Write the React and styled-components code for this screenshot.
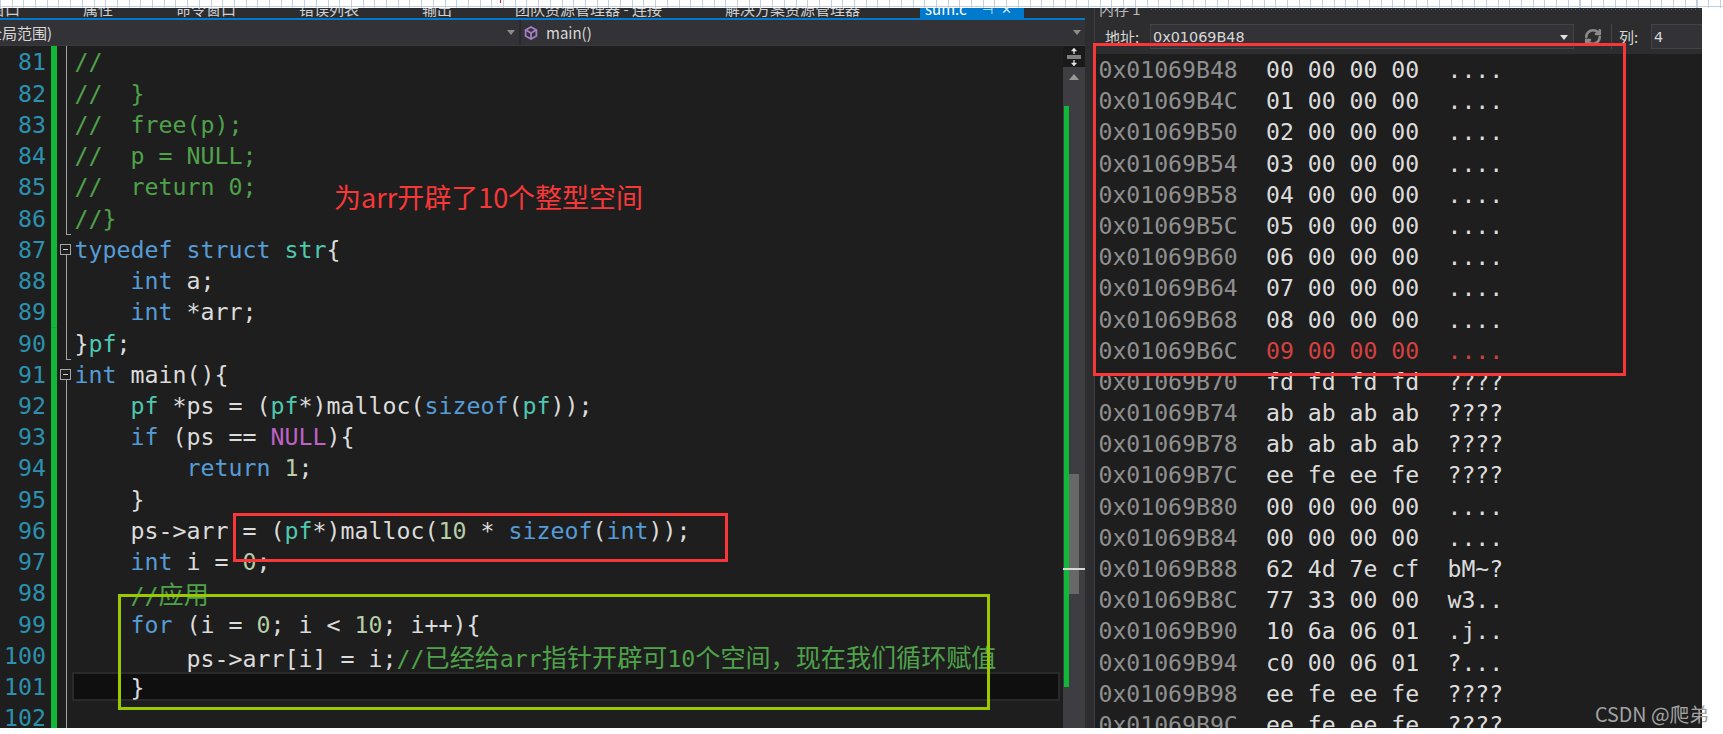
// App.jsx
import React from 'react';
import styled, { createGlobalStyle } from 'styled-components';
import { RefreshCw } from 'lucide-react';

const MONO = `"DejaVu Sans Mono", "Noto Sans CJK SC", monospace`;
const UI = `"Noto Sans CJK SC", "Noto Sans", sans-serif`;

const GlobalStyle = createGlobalStyle`
  html, body {
    margin: 0;
    padding: 0;
    background: #fff;
  }
`;

const Page = styled.div`
  position: relative;
  width: 1723px;
  height: 734px;
  overflow: hidden;
  background: #fff;
  font-family: ${UI};
`;

const RulerStrip = styled.div`
  height: 8px;
  background:
    linear-gradient(#e02020, #e02020) 500px 0 / 1px 3px no-repeat,
    linear-gradient(#c3cfe2, #c3cfe2) 0 6px / 100% 1px no-repeat,
    repeating-linear-gradient(90deg, #c3cfe2 0 1px, #fff 1px 11.7px);
`;

const Workspace = styled.div`
  display: flex;
  width: 1702px;
  height: 720px;
  background: #2d2d30;
`;

const EditorPane = styled.div`
  display: flex;
  flex-direction: column;
  width: 1085px;
  flex: none;
  margin-right: 9px;
`;

const TabBar = styled.div`
  display: flex;
  align-items: flex-end;
  gap: 63px;
  height: 10px;
  overflow: hidden;
  border-bottom: 2px solid #007acc;
  background: #2d2d30;
`;

const Tab = styled.div`
  flex: none;
  height: 18px;
  line-height: 18px;
  font-size: 15px;
  color: #d0d0d0;
  white-space: nowrap;
  &:first-child {
    margin-left: -10px;
  }
`;

const ActiveTab = styled(Tab)`
  display: flex;
  align-items: center;
  width: 104px;
  margin-left: -3px;
  padding-left: 5px;
  box-sizing: border-box;
  background: #007acc;
  color: #fff;
`;

const TabGlyph = styled.span`
  margin-left: ${p => p.$gap}px;
  font-size: 13px;
  color: #cfe6f6;
`;

const NavBar = styled.div`
  display: flex;
  height: 25px;
  border-bottom: 1px solid #3a3a3e;
  background: #333337;
  box-sizing: content-box;
`;

const NavCombo = styled.div`
  display: flex;
  align-items: center;
  flex: ${p => (p.$grow ? 1 : 'none')};
  width: ${p => (p.$grow ? 'auto' : '519px')};
  overflow: hidden;
  font-size: 15px;
  line-height: 25px;
  color: #d8d8d8;
  white-space: nowrap;
  & + & {
    border-left: 2px solid #2a2a2d;
  }
`;

const NavScope = styled.span`
  flex: 1;
  margin-left: -18px;
`;

const NavMember = styled.span`
  flex: 1;
  margin-left: 8px;
`;

const DropArrow = styled.span`
  flex: none;
  width: 0;
  height: 0;
  margin-right: ${p => p.$right}px;
  border-left: 4px solid transparent;
  border-right: 4px solid transparent;
  border-top: 5px solid ${p => p.$color || '#8c8c8c'};
`;

const MemberIcon = styled.svg`
  flex: none;
  width: 14px;
  height: 14px;
  margin-left: 3px;
`;

const EditorBody = styled.div`
  display: flex;
  flex: 1;
  min-height: 0;
  background: #1e1e1e;
`;

const CodeArea = styled.div`
  flex: 1;
  min-width: 0;
  padding-top: 0.4px;
  overflow: hidden;
`;

const CodeRow = styled.div`
  display: grid;
  grid-template-columns: 46px 5px 6px 15px 1fr;
  height: 31.24px;
  font-family: ${MONO};
  font-size: 23.25px;
  line-height: 32.2px;
`;

const LineNo = styled.div`
  grid-column: 1;
  text-align: right;
  color: #2b91af;
`;

const ChangeMark = styled.div`
  grid-column: 3;
  background: #10b837;
  border-bottom: 1px solid #12a536;
`;

const Outline = styled.div`
  grid-column: 4;
  position: relative;
  &::before {
    content: '';
    position: absolute;
    left: 9px;
    top: ${p => (p.$kind === 'open' ? '50%' : '0')};
    bottom: 0;
    width: 1px;
    background: #a5a5a5;
  }
  ${p => p.$kind === 'end' && `
    &::after {
      content: '';
      position: absolute;
      left: 9px;
      bottom: 0;
      width: 5px;
      height: 1px;
      background: #a5a5a5;
    }
  `}
`;

const FoldBox = styled.span`
  position: absolute;
  left: 3px;
  top: 10px;
  width: 11px;
  height: 11px;
  box-sizing: border-box;
  border: 1px solid #a5a5a5;
  background: #1e1e1e;
  &::after {
    content: '';
    position: absolute;
    left: 2px;
    right: 2px;
    top: 4px;
    height: 1px;
    background: #d0d0d0;
  }
`;

const CodeText = styled.div`
  grid-column: 5;
  padding-left: 2.6px;
  white-space: pre;
  color: #dcdcdc;
  ${p => p.$current && `
    height: 29px;
    margin: 1px 3px 0 0;
    box-sizing: border-box;
    border: 2px solid #2a2a2a;
    padding-left: 0.6px;
    line-height: 28px;
    background: #0f0f0f;
  `}
`;

const TOKEN_COLORS = {
  kw: '#569cd6',
  type: '#4ec9b0',
  num: '#b5cea8',
  macro: '#bd63c5',
  cm: '#4fa24a',
};

const Token = styled.span`
  color: ${p => TOKEN_COLORS[p.$t] || '#dcdcdc'};
`;

const Cjk = styled.span`
  font-family: ${UI};
  font-size: 25.1px;
`;

const ScrollBar = styled.div`
  display: flex;
  flex-direction: column;
  flex: none;
  width: 22px;
  background: #3e3e42;
`;

const SplitButton = styled.div`
  display: flex;
  align-items: center;
  justify-content: center;
  height: 21px;
  background: #1a1a1a;
`;

const ScrollUp = styled.div`
  height: 0;
  width: 0;
  margin: 7px 0 0 6px;
  border-left: 5.5px solid transparent;
  border-right: 5.5px solid transparent;
  border-bottom: 6px solid #999;
`;

const ScrollTrack = styled.div`
  position: relative;
  flex: 1;
`;

const ScrollThumb = styled.div`
  position: absolute;
  left: 6px;
  top: 394px;
  width: 10px;
  height: 120px;
  background: #686868;
`;

const CoverageBar = styled.div`
  position: absolute;
  left: 1px;
  top: 26px;
  width: 5px;
  height: 581px;
  background: #10b837;
`;

const CaretMark = styled.div`
  position: absolute;
  left: 0;
  right: 0;
  top: 488px;
  height: 2px;
  background: #d8d8d8;
`;

const MemoryPane = styled.div`
  display: flex;
  flex-direction: column;
  flex: 1;
  min-width: 0;
  overflow: hidden;
  border-left: 1px solid #3f3f46;
`;

const PaneTitle = styled.div`
  display: flex;
  align-items: flex-end;
  height: 10px;
  padding-left: 4px;
  overflow: hidden;
`;

const PaneTitleText = styled.div`
  flex: none;
  height: 18px;
  line-height: 18px;
  font-size: 15px;
  color: #b8b8b8;
  white-space: nowrap;
`;

const PaneGrip = styled.div`
  flex: 1;
  height: 1px;
  margin: 0 0 8px 10px;
  background: repeating-linear-gradient(90deg, #5a5a5e 0 1px, transparent 1px 4px);
`;

const MemoryToolbar = styled.div`
  display: flex;
  align-items: flex-start;
  height: 30px;
  padding: 6px 0 0 10px;
  font-size: 15px;
  line-height: 25px;
  color: #d8d8d8;
  white-space: nowrap;
`;

const FieldLabel = styled.span`
  flex: none;
  width: ${p => p.$w}px;
`;

const AddressInput = styled.div`
  display: flex;
  align-items: center;
  flex: none;
  width: 424px;
  height: 25px;
  box-sizing: border-box;
  padding: 1px 0 0 2px;
  border: 1px solid #434346;
  background: #333337;
  font-family: "DejaVu Sans", sans-serif;
  font-size: 14.4px;
`;

const InputValue = styled.span`
  flex: 1;
`;

const RefreshButton = styled.div`
  display: flex;
  justify-content: center;
  align-items: center;
  flex: none;
  width: 37px;
  height: 25px;
  color: #8a8a8a;
`;

const ToolSeparator = styled.div`
  flex: none;
  width: 1px;
  height: 25px;
  margin-right: 7px;
  background: #45454a;
`;

const ColumnInput = styled(AddressInput)`
  width: 60px;
`;

const MemoryList = styled.div`
  flex: 1;
  min-height: 0;
  overflow: hidden;
  background: #1e1e1e;
`;

const MemoryRow = styled.div`
  display: flex;
  height: 31.2px;
  padding-left: 3.5px;
  font-family: ${MONO};
  font-size: 23.14px;
  line-height: 32.2px;
  white-space: pre;
`;

const MemAddr = styled.span`
  flex: none;
  width: 167.5px;
  color: #8f8f8f;
`;

const MemHex = styled.span`
  flex: none;
  width: 181.5px;
  color: ${p => (p.$changed ? '#d64040' : '#dcdcdc')};
`;

const MemAscii = styled.span`
  flex: none;
  color: ${p => (p.$changed ? '#d64040' : '#dcdcdc')};
`;

// annotations drawn on top of the screenshot
const MemoryMark = styled.div`
  position: absolute;
  left: 1093px;
  top: 43px;
  width: 533px;
  height: 333px;
  box-sizing: border-box;
  border: 3px solid #f83838;
`;

const MallocMark = styled.div`
  position: absolute;
  left: 233px;
  top: 513px;
  width: 495px;
  height: 49px;
  box-sizing: border-box;
  border: 3px solid #f83838;
`;

const LoopMark = styled.div`
  position: absolute;
  left: 118px;
  top: 594px;
  width: 872px;
  height: 116px;
  box-sizing: border-box;
  border: 3px solid #9bc800;
`;

const Annotation = styled.div`
  position: absolute;
  left: 334px;
  top: 177px;
  font-size: 27px;
  line-height: 40px;
  color: #f83838;
  white-space: nowrap;
`;

const Watermark = styled.div`
  position: absolute;
  left: 1595px;
  top: 701px;
  font-size: 19.7px;
  line-height: 26px;
  color: #a3a3a3;
  white-space: nowrap;
`;

const t = (kind, text) => ({ kind, text });

const CODE_LINES = [
  { no: 81, outline: 'line', tokens: [t('cm', '//')] },
  { no: 82, outline: 'line', tokens: [t('cm', '//  }')] },
  { no: 83, outline: 'line', tokens: [t('cm', '//  free(p);')] },
  { no: 84, outline: 'line', tokens: [t('cm', '//  p = NULL;')] },
  { no: 85, outline: 'line', tokens: [t('cm', '//  return 0;')] },
  { no: 86, outline: 'end', tokens: [t('cm', '//}')] },
  { no: 87, outline: 'open', tokens: [t('kw', 'typedef'), t('', ' '), t('kw', 'struct'), t('', ' '), t('type', 'str'), t('', '{')] },
  { no: 88, outline: 'line', tokens: [t('', '    '), t('kw', 'int'), t('', ' a;')] },
  { no: 89, outline: 'line', tokens: [t('', '    '), t('kw', 'int'), t('', ' *arr;')] },
  { no: 90, outline: 'end', tokens: [t('', '}'), t('type', 'pf'), t('', ';')] },
  { no: 91, outline: 'open', tokens: [t('kw', 'int'), t('', ' main(){')] },
  { no: 92, outline: 'line', tokens: [t('', '    '), t('type', 'pf'), t('', ' *ps = ('), t('type', 'pf'), t('', '*)malloc('), t('kw', 'sizeof'), t('', '('), t('type', 'pf'), t('', '));')] },
  { no: 93, outline: 'line', tokens: [t('', '    '), t('kw', 'if'), t('', ' (ps == '), t('macro', 'NULL'), t('', '){')] },
  { no: 94, outline: 'line', tokens: [t('', '        '), t('kw', 'return'), t('', ' '), t('num', '1'), t('', ';')] },
  { no: 95, outline: 'line', tokens: [t('', '    }')] },
  { no: 96, outline: 'line', tokens: [t('', '    ps->arr = ('), t('type', 'pf'), t('', '*)malloc('), t('num', '10'), t('', ' * '), t('kw', 'sizeof'), t('', '('), t('kw', 'int'), t('', '));')] },
  { no: 97, outline: 'line', tokens: [t('', '    '), t('kw', 'int'), t('', ' i = '), t('num', '0'), t('', ';')] },
  { no: 98, outline: 'line', tokens: [t('cm', '    //'), t('cjk', '应用')] },
  { no: 99, outline: 'line', tokens: [t('', '    '), t('kw', 'for'), t('', ' (i = '), t('num', '0'), t('', '; i < '), t('num', '10'), t('', '; i++){')] },
  {
    no: 100,
    outline: 'line',
    tokens: [
      t('', '        ps->arr[i] = i;'), t('cm', '//'), t('cjk', '已经给'), t('cm', 'arr'), t('cjk', '指针开辟可'),
      t('cm', '10'), t('cjk', '个空间，现在我们循环赋值'),
    ],
  },
  { no: 101, outline: 'line', current: true, tokens: [t('', '    }')] },
  { no: 102, outline: 'line', tokens: [] },
];

const MEMORY_ROWS = [
  ['B48', '00 00 00 00', '....'],
  ['B4C', '01 00 00 00', '....'],
  ['B50', '02 00 00 00', '....'],
  ['B54', '03 00 00 00', '....'],
  ['B58', '04 00 00 00', '....'],
  ['B5C', '05 00 00 00', '....'],
  ['B60', '06 00 00 00', '....'],
  ['B64', '07 00 00 00', '....'],
  ['B68', '08 00 00 00', '....'],
  ['B6C', '09 00 00 00', '....', true],
  ['B70', 'fd fd fd fd', '????'],
  ['B74', 'ab ab ab ab', '????'],
  ['B78', 'ab ab ab ab', '????'],
  ['B7C', 'ee fe ee fe', '????'],
  ['B80', '00 00 00 00', '....'],
  ['B84', '00 00 00 00', '....'],
  ['B88', '62 4d 7e cf', 'bM~?'],
  ['B8C', '77 33 00 00', 'w3..'],
  ['B90', '10 6a 06 01', '.j..'],
  ['B94', 'c0 00 06 01', '?...'],
  ['B98', 'ee fe ee fe', '????'],
  ['B9C', 'ee fe ee fe', '????'],
];

const TABS = ['窗口', '属性', '命令窗口', '错误列表', '输出', '团队资源管理器 - 连接', '解决方案资源管理器'];

const renderToken = (token, i) => {
  if (token.kind === 'cjk') {
    return (
      <Token key={i} $t="cm">
        <Cjk>{token.text}</Cjk>
      </Token>
    );
  }
  return <Token key={i} $t={token.kind}>{token.text}</Token>;
};

const App = () => (
  <Page>
    <GlobalStyle />
    <RulerStrip />
    <Workspace>
      <EditorPane>
        <TabBar>
          {TABS.map(name => <Tab key={name}>{name}</Tab>)}
          <ActiveTab>
            sum.c
            <TabGlyph $gap={15}>⊣</TabGlyph>
            <TabGlyph $gap={8}>✕</TabGlyph>
          </ActiveTab>
        </TabBar>
        <NavBar>
          <NavCombo>
            <NavScope>(全局范围)</NavScope>
            <DropArrow $right={4} />
          </NavCombo>
          <NavCombo $grow>
            <MemberIcon viewBox="0 0 14 14" fill="none" stroke="#a47fc4" strokeWidth="1.8">
              <path d="M7 1l5.4 3v6L7 13l-5.4-3V4z" />
              <path d="M7 7v6M7 7L1.8 4M7 7l5.2-3" />
            </MemberIcon>
            <NavMember>main()</NavMember>
            <DropArrow $right={4} />
          </NavCombo>
        </NavBar>
        <EditorBody>
          <CodeArea>
            {CODE_LINES.map(line => (
              <CodeRow key={line.no}>
                <LineNo>{line.no}</LineNo>
                <ChangeMark />
                <Outline $kind={line.outline}>
                  {line.outline === 'open' && <FoldBox />}
                </Outline>
                <CodeText $current={line.current}>{line.tokens.map(renderToken)}</CodeText>
              </CodeRow>
            ))}
          </CodeArea>
          <ScrollBar>
            <SplitButton>
              <svg width="16" height="20" viewBox="0 0 16 20" fill="none" stroke="#e8e8e8">
                <path d="M1 9h14M1 11h14" strokeWidth="1.2" />
                <path d="M8 7V2M8 13v5" strokeWidth="1.2" />
                <path d="M5.5 4L8 1l2.5 3zM5.5 16L8 19l2.5-3z" fill="#e8e8e8" strokeWidth="0.5" />
              </svg>
            </SplitButton>
            <ScrollUp />
            <ScrollTrack>
              <ScrollThumb />
              <CoverageBar />
              <CaretMark />
            </ScrollTrack>
          </ScrollBar>
        </EditorBody>
      </EditorPane>
      <MemoryPane>
        <PaneTitle>
          <PaneTitleText>内存 1</PaneTitleText>
          <PaneGrip />
        </PaneTitle>
        <MemoryToolbar>
          <FieldLabel $w={45}>地址:</FieldLabel>
          <AddressInput>
            <InputValue>0x01069B48</InputValue>
            <DropArrow $right={5} $color="#e0e0e0" />
          </AddressInput>
          <RefreshButton>
            <RefreshCw size={18} strokeWidth={3.5} />
          </RefreshButton>
          <ToolSeparator />
          <FieldLabel $w={32}>列:</FieldLabel>
          <ColumnInput>4</ColumnInput>
        </MemoryToolbar>
        <MemoryList>
          {MEMORY_ROWS.map(([addr, hex, ascii, changed]) => (
            <MemoryRow key={addr}>
              <MemAddr>0x01069{addr}</MemAddr>
              <MemHex $changed={changed}>{hex}</MemHex>
              <MemAscii $changed={changed}>{ascii}</MemAscii>
            </MemoryRow>
          ))}
        </MemoryList>
      </MemoryPane>
    </Workspace>
    <MemoryMark />
    <MallocMark />
    <LoopMark />
    <Annotation>为arr开辟了10个整型空间</Annotation>
    <Watermark>CSDN @爬弟</Watermark>
  </Page>
);

export default App;
